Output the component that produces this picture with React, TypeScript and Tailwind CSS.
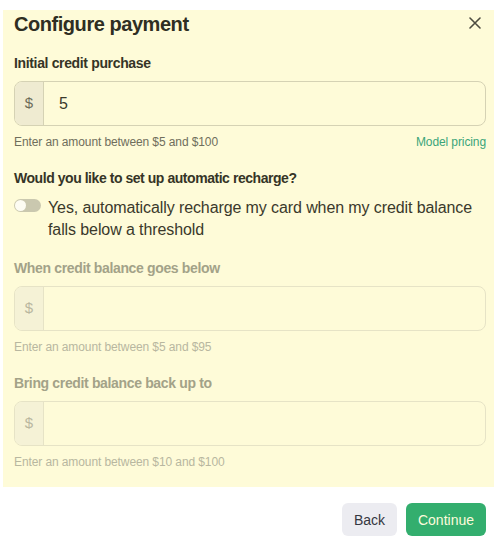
import React from "react";

function MoneyInput({ value, disabled }: { value?: string; disabled?: boolean }) {
  return (
    <div
      className={`mt-2 flex h-[45px] overflow-hidden rounded-lg border ${
        disabled ? "border-[#e6e3c6]" : "border-[#d5d2b4]"
      }`}
    >
      <div
        className={`flex w-[29px] shrink-0 items-center justify-center border-r text-[15px] ${
          disabled
            ? "border-[#e6e3c6] bg-[#f5f2d6] text-[#b9b79f]"
            : "border-[#d5d2b4] bg-[#efebd1] text-[#6d6b5a]"
        }`}
      >
        $
      </div>
      <div className="flex flex-1 items-center pl-[15px] text-base text-[#3a392b]">{value}</div>
    </div>
  );
}

export default function App() {
  return (
    <div
      className="min-h-[554px] bg-white pt-[10px]"
      style={{ fontFamily: '"Liberation Sans", Arial, sans-serif' }}
    >
      <div className="ml-[3px] w-[491px] bg-[#fefbd8] pb-[17px] pl-[11px] pr-[8px]">
        <div className="flex items-start justify-between">
          <h1 className="text-[20px] font-bold leading-[28px] tracking-[-0.45px] text-[#2f2e22]">
            Configure payment
          </h1>
          <svg className="mr-[5px] mt-[7px]" width="12" height="12" viewBox="0 0 12 12">
            <path d="M1 1 L11 11 M11 1 L1 11" stroke="#4d4c40" strokeWidth="1.6" strokeLinecap="round" />
          </svg>
        </div>

        <div className="mt-[15px] text-sm font-bold leading-5 tracking-[-0.35px] text-[#353426]">
          Initial credit purchase
        </div>
        <MoneyInput value="5" />
        <div className="mt-2 flex justify-between text-xs leading-4 tracking-[-0.1px]">
          <span className="text-[#6f6e5c]">Enter an amount between $5 and $100</span>
          <span className="text-[#3ba57a]">Model pricing</span>
        </div>

        <div className="mt-[18px] text-sm font-bold leading-5 tracking-[-0.45px] text-[#353426]">
          Would you like to set up automatic recharge?
        </div>
        <div className="mt-[9px] flex items-start gap-[7px]">
          <div className="mt-[2px] flex h-[13px] w-[27px] shrink-0 items-center rounded-full bg-[#cac8af] px-[1px]">
            <div className="h-[11px] w-[11px] rounded-full bg-[#fdfcf3]" />
          </div>
          <div className="text-base leading-[22px] tracking-[-0.1px] text-[#3a392b]">
            Yes, automatically recharge my card when my credit balance falls below a threshold
          </div>
        </div>

        <div className="mt-[17px] text-sm font-bold leading-5 tracking-[-0.35px] text-[#a3a288]">
          When credit balance goes below
        </div>
        <MoneyInput disabled />
        <div className="mt-2 text-xs leading-4 tracking-[-0.1px] text-[#b8b7a0]">
          Enter an amount between $5 and $95
        </div>

        <div className="mt-[18px] text-sm font-bold leading-5 tracking-[-0.35px] text-[#a3a288]">
          Bring credit balance back up to
        </div>
        <MoneyInput disabled />
        <div className="mt-2 text-xs leading-4 tracking-[-0.1px] text-[#b8b7a0]">
          Enter an amount between $10 and $100
        </div>
      </div>

      <div className="mt-4 flex justify-end gap-[9px] pr-[15px]">
        <button className="h-[33px] w-[55px] rounded-md bg-[#ececf1] text-sm text-[#353740]">Back</button>
        <button className="h-[33px] w-[80px] rounded-md bg-[#33ae6e] text-sm text-[#fdfbdc]">Continue</button>
      </div>
    </div>
  );
}
